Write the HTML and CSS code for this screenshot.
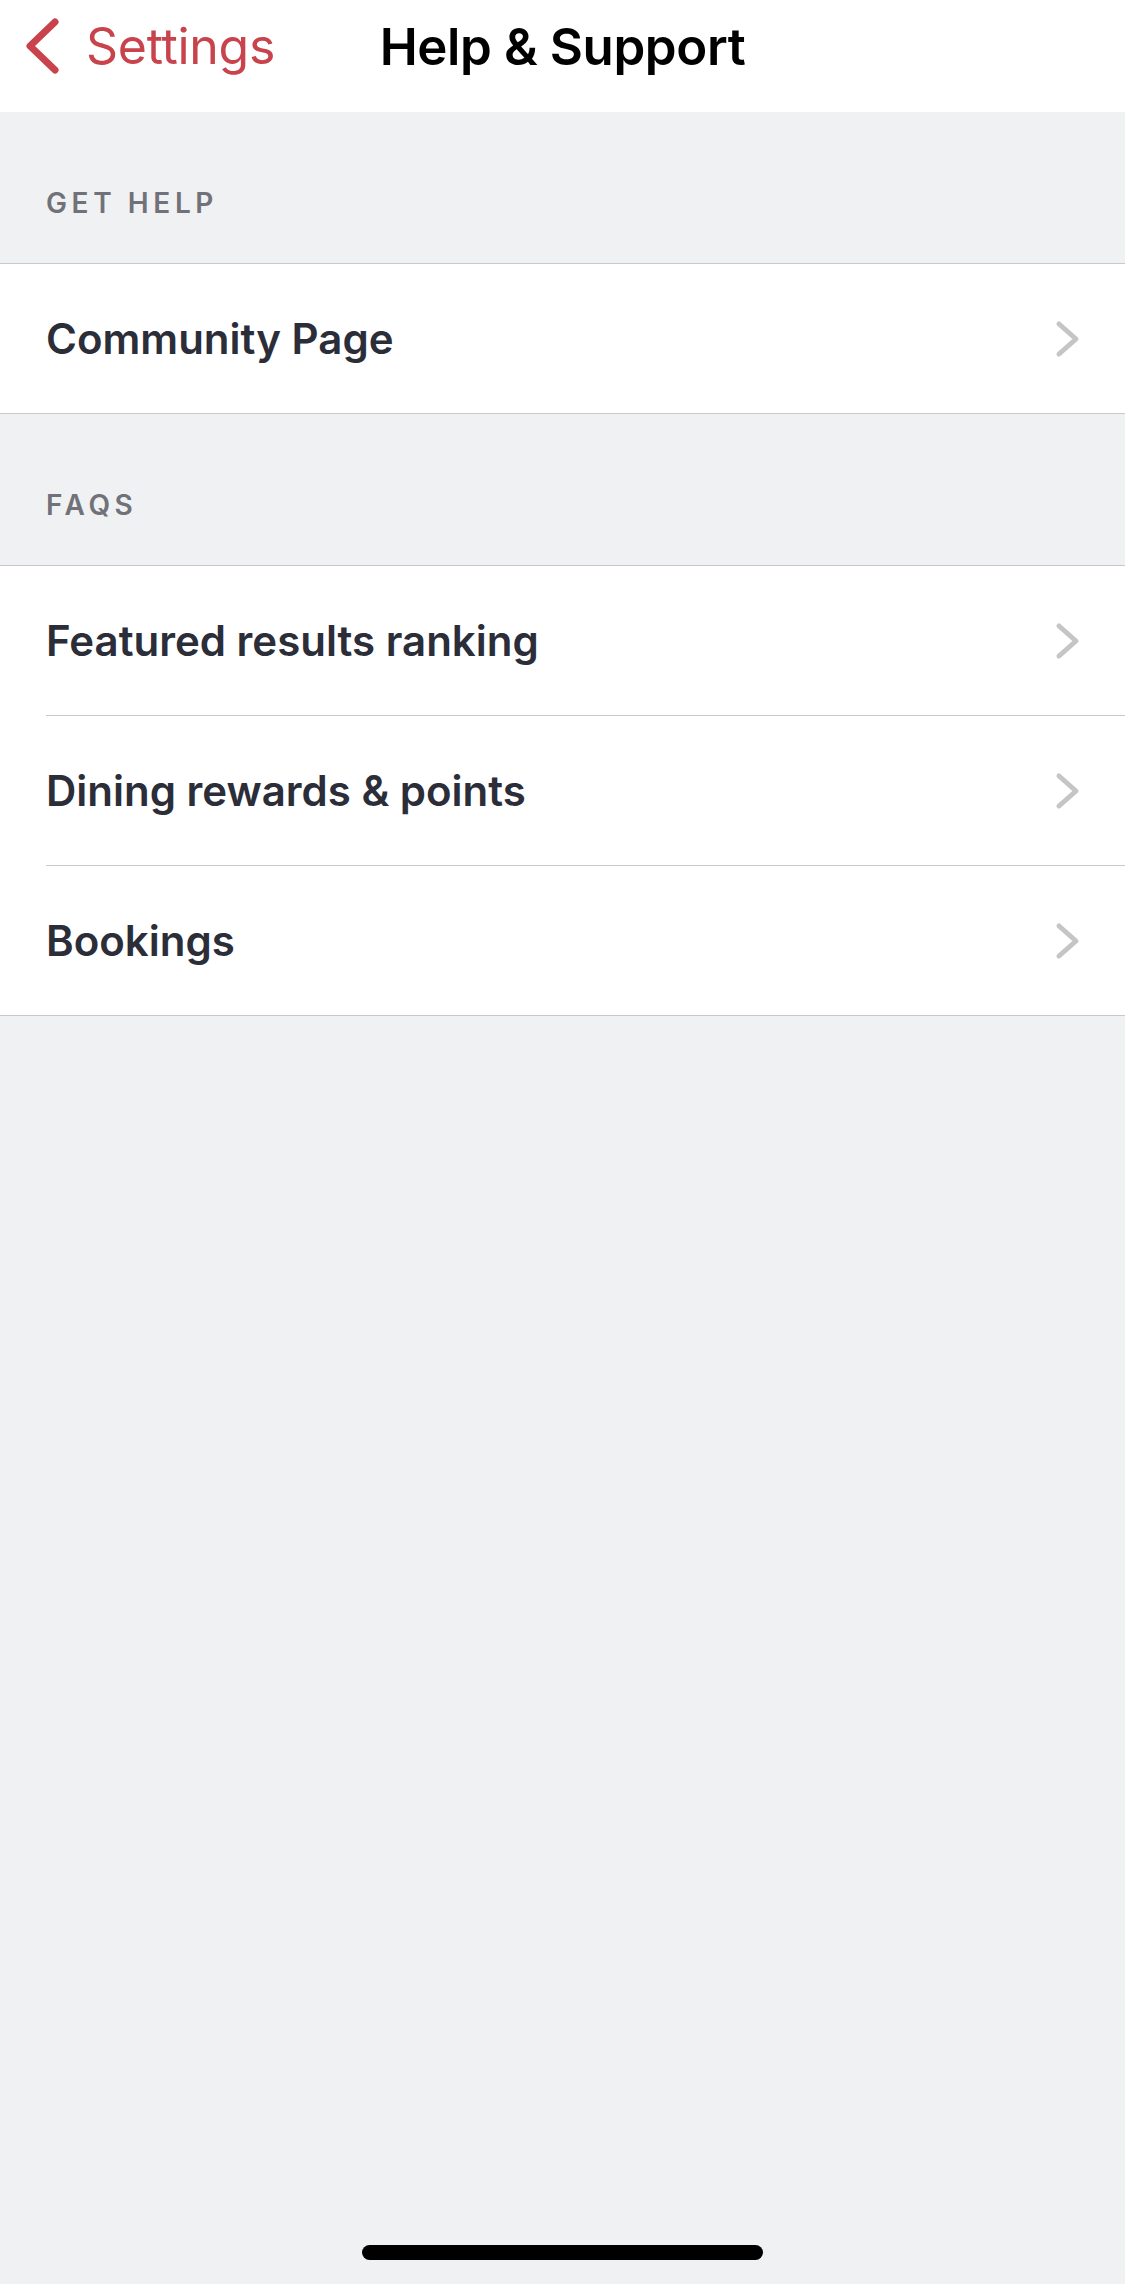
FILE: index.html
```html
<!DOCTYPE html>
<html lang="en">
<head>
    <meta charset="UTF-8">
    <meta name="viewport" content="width=device-width, initial-scale=1.0">
    <title>Help &amp; Support</title>
    <link rel="stylesheet" href="styles.css">
</head>
<body>
    <div class="screen">
        <div class="nav-bar">
            <a class="back-button" href="#">
                <svg class="back-chevron" viewBox="0 0 36 56" width="36" height="56">
                    <path d="M31 4 L6 28 L31 52" fill="none" stroke="currentColor" stroke-width="7" stroke-linecap="round" stroke-linejoin="round"/>
                </svg>
                <span>Settings</span>
            </a>
            <h1 class="nav-title">Help &amp; Support</h1>
            <div></div>
        </div>

        <div class="section-header">Get Help</div>
        <div class="list-group">
            <a class="list-row" href="#">
                <span class="row-label">Community Page</span>
                <svg class="row-chevron" viewBox="0 0 26 38" width="26" height="38">
                    <path d="M4 4 L21 19 L4 34" fill="none" stroke="currentColor" stroke-width="5" stroke-linecap="round" stroke-linejoin="round"/>
                </svg>
            </a>
        </div>

        <div class="section-header">FAQs</div>
        <div class="list-group">
            <a class="list-row" href="#">
                <span class="row-label">Featured results ranking</span>
                <svg class="row-chevron" viewBox="0 0 26 38" width="26" height="38">
                    <path d="M4 4 L21 19 L4 34" fill="none" stroke="currentColor" stroke-width="5" stroke-linecap="round" stroke-linejoin="round"/>
                </svg>
            </a>
            <a class="list-row" href="#">
                <span class="row-label">Dining rewards &amp; points</span>
                <svg class="row-chevron" viewBox="0 0 26 38" width="26" height="38">
                    <path d="M4 4 L21 19 L4 34" fill="none" stroke="currentColor" stroke-width="5" stroke-linecap="round" stroke-linejoin="round"/>
                </svg>
            </a>
            <a class="list-row" href="#">
                <span class="row-label">Bookings</span>
                <svg class="row-chevron" viewBox="0 0 26 38" width="26" height="38">
                    <path d="M4 4 L21 19 L4 34" fill="none" stroke="currentColor" stroke-width="5" stroke-linecap="round" stroke-linejoin="round"/>
                </svg>
            </a>
        </div>

        <div class="home-indicator"></div>
    </div>
</body>
</html>
```

FILE: styles.css
```css
body {
    font-family: 'Inter', 'Liberation Sans', sans-serif;
    background-color: #f0f1f3;
    margin: 0;
    padding: 0;
}
.screen {
    display: flex;
    flex-direction: column;
    min-height: 2284px;
    box-sizing: border-box;
}
.nav-bar {
    display: grid;
    grid-template-columns: 1fr auto 1fr;
    align-items: center;
    height: 112px;
    background-color: #fff;
    padding-bottom: 20px;
    box-sizing: border-box;
}
.back-button {
    display: flex;
    align-items: center;
    gap: 26px;
    padding-left: 24px;
    color: #c8434c;
    text-decoration: none;
    font-size: 50px;
    font-weight: 400;
    letter-spacing: -0.3px;
}
.back-chevron {
    flex-shrink: 0;
}
.nav-title {
    margin: 0;
    font-size: 51px;
    font-weight: 600;
    color: #000;
    letter-spacing: -0.4px;
}
.section-header {
    height: 151px;
    padding: 0 0 43px 46px;
    display: flex;
    align-items: flex-end;
    box-sizing: border-box;
    font-size: 28px;
    font-weight: 600;
    letter-spacing: 4.6px;
    text-transform: uppercase;
    color: #717279;
}
.list-group {
    background-color: #fff;
    border-top: 1px solid #c9c9cd;
    border-bottom: 1px solid #c9c9cd;
    padding-left: 46px;
}
.list-row {
    display: flex;
    align-items: center;
    justify-content: space-between;
    height: 149px;
    padding-right: 44px;
    color: #2b2d39;
    text-decoration: none;
    border-bottom: 1px solid #c9c9cd;
}
.list-row:last-child {
    border-bottom: none;
}
.row-label {
    font-size: 42px;
    font-weight: 600;
}
.row-chevron {
    color: #c5c5c8;
}
.home-indicator {
    margin: auto auto 24px;
    width: 401px;
    height: 15px;
    border-radius: 8px;
    background-color: #000;
}
```
